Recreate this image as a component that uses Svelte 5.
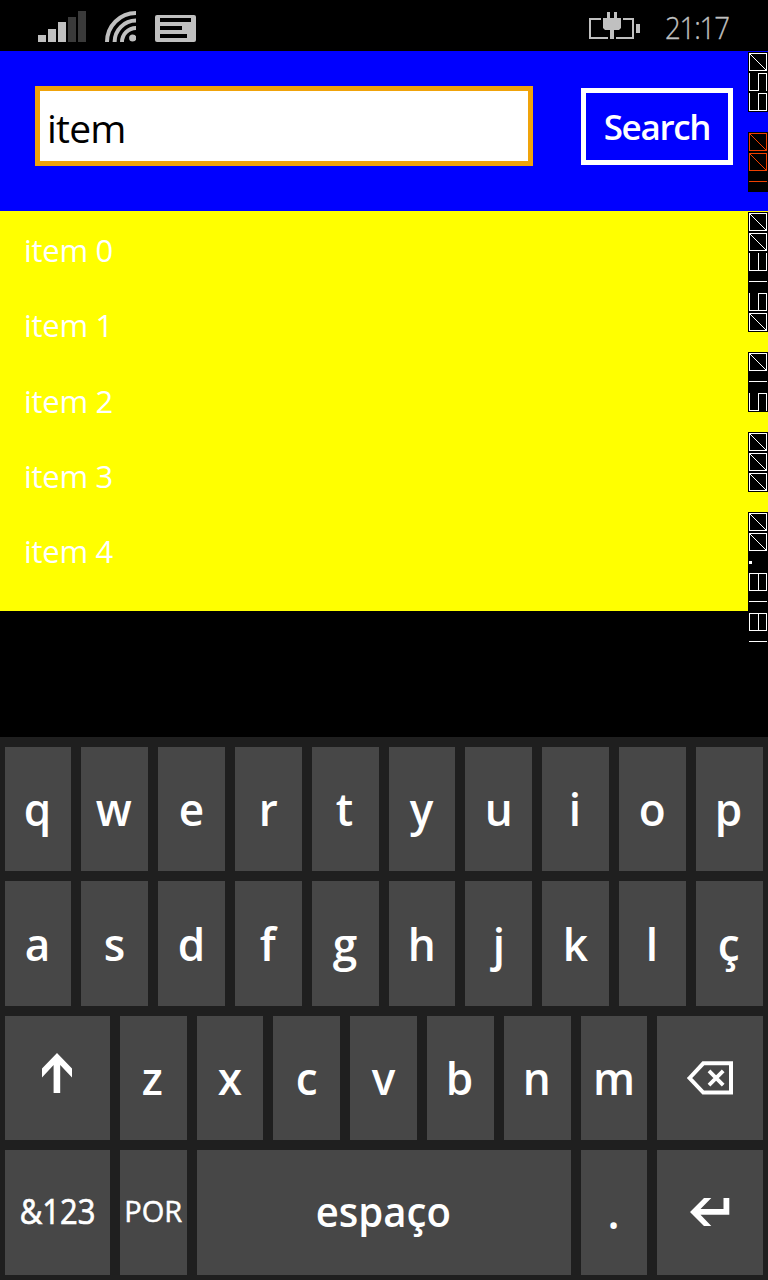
<script>
  const items = [0, 1, 2, 3, 4].map((n) => `item ${n}`);
  const rows = [
    [...'qwertyuiop'].map((k) => ({ k })),
    [...'asdfghjklç'].map((k) => ({ k })),
    [{ icon: 'shift', w: 3 }, ...[...'zxcvbnm'].map((k) => ({ k })), { icon: 'back', w: 3 }],
    [{ k: '&123', w: 3, c: 'num' }, { k: 'POR', c: 'lang' }, { k: 'espaço', w: 10, c: 'space' }, { k: '.' }, { icon: 'enter', w: 3 }]
  ];
  // Frame counters, written sideways as segment digits
  const counters = [
    { d: '056' },
    { d: '001', hot: true },
    { d: '003160' },
    { d: '015' },
    { d: '000' },
    { d: '00.8181' }
  ];
  const seg = {
    0: 'M1.5 1.5H18.5V18.5H1.5ZM1.5 1.5L18.5 18.5',
    1: 'M1 9.5H19',
    3: 'M1.5 1V18.5H18.5V1M10.5 1V18',
    5: 'M1.5 1V18.5H10.5V1.5H18.5V19',
    6: 'M1.5 1V18.5H18.5V1.5H10.5V18',
    8: 'M1.5 1.5H18.5V18.5H1.5ZM10.5 1V18',
    '.': 'M1 10.5H4M1 9.5H4M1 11.5H4'
  };
</script>

<div class="screen">
  <div class="status">
    <svg class="signal" width="48" height="31">
      <path fill="#c0c0c0" d="M0 24h8v7H0zM10 18h8v13h-8zM20 11h8v20h-8z" />
      <path fill="#3a3a3a" d="M30 6h8v25h-8zM40 0h8v31h-8z" />
    </svg>
    <svg class="wifi" width="31" height="31">
      <g fill="none" stroke="#c0c0c0" stroke-width="4">
        <circle cx="31" cy="31" r="29" /><circle cx="31" cy="31" r="21.4" /><circle cx="31" cy="31" r="14" />
      </g>
      <circle cx="27.7" cy="27" r="3.6" fill="#c0c0c0" />
    </svg>
    <svg class="msg" width="41" height="27">
      <rect width="41" height="27" rx="2" fill="#c0c0c0" />
      <path d="M5 3h31v4H5zM5 11h22v4H5zM5 19h27v4H5z" />
    </svg>
    <svg class="battery" width="52" height="27">
      <path fill="none" stroke="#c0c0c0" stroke-width="2" d="M12 7H1V26H19M34 7H44V26H27" />
      <path fill="#c0c0c0" d="M47 12h4v9h-4zM18 0h3v6h4V0h3v6h4v10l-2 2h-5v9h-4v-9h-5l-2-2V6h4z" />
    </svg>
    <span class="time">21:17</span>
  </div>

  <div class="search">
    <div class="field"><span>item</span></div>
    <div class="button"><span>Search</span></div>
  </div>

  <div class="list">
    {#each items as item}<div class="item">{item}</div>{/each}
  </div>

  <div class="keyboard">
    {#each rows as row}
      {#each row as key}
        <div class="key {key.c ?? ''}" style="grid-column: span {key.w ?? 2}">
          {#if key.icon === 'shift'}
            <svg class="shift" width="30" height="40"><path fill="#fff" d="M15 0L30 15.5V24.5L18.2 12V40H11.6V12L0 24.5V15.5Z" /></svg>
          {:else if key.icon === 'back'}
            <svg width="46" height="34">
              <path fill="none" stroke="#fff" stroke-width="4" d="M2.6 17L16.3 2.3H44V31.5H16.3Z" />
              <path fill="none" stroke="#fff" stroke-width="3.8" d="M22 9.8L36.2 24.2M36.2 9.8L22 24.2" />
            </svg>
          {:else if key.icon === 'enter'}
            <svg width="40" height="30"><path fill="#fff" d="M0 15L14 1H21.3L10.5 12H33.5V1H39.3V17.8H10.5L21.3 29H14Z" /></svg>
          {:else}
            <span>{key.k}</span>
          {/if}
        </div>
      {/each}
    {/each}
  </div>

  <div class="counters">
    {#each counters as c}
      <div class="counter" class:hot={c.hot}>
        {#each [...c.d] as d}
          <svg width="20" height="20" shape-rendering="crispEdges"><path d={seg[d]} /></svg>
        {/each}
      </div>
    {/each}
  </div>
</div>

<style>
  :global(body) { margin: 0; background: #000; }
  .screen {
    position: relative; width: 768px; height: 1280px; overflow: hidden;
    display: flex; flex-direction: column; box-sizing: border-box;
    background: #000; color: #fff; font-family: "Open Sans", "Noto Sans", sans-serif;
  }
  svg { display: block; flex: none; }
  .status { height: 51px; flex: none; display: flex; align-items: flex-start; padding: 0 38px; box-sizing: border-box; }
  .signal { margin-top: 11px; }
  .wifi { margin: 11px 0 0 19px; }
  .msg { margin: 15px 0 0 19px; }
  .battery { margin: 12px 0 0 393px; }
  .time { margin: 6px 0 0 24px; color: #c0c0c0; font-size: 31px; line-height: 42px; font-weight: 300; letter-spacing: -1.3px; white-space: nowrap; transform: scaleX(.89); transform-origin: 0 0; -webkit-text-stroke: .3px #c0c0c0; }
  .search { height: 160px; flex: none; background: #00f; display: flex; align-items: flex-start; padding: 35px 35px 0; box-sizing: border-box; justify-content: space-between; }
  .field { width: 498px; height: 80px; box-sizing: border-box; border: 5px solid #f0a30a; background: #fff; color: #000; font-size: 39px; line-height: 74px; padding-left: 7px; letter-spacing: -.8px; }
  .button { margin-top: 2px; width: 152px; height: 77px; box-sizing: border-box; border: 5px solid #fff; text-align: center; font-size: 35px; font-weight: 600; line-height: 68px; letter-spacing: -1.3px; }
  .list { height: 400px; flex: none; background: #ff0; padding: 2px 24px 0; box-sizing: border-box; }
  .item { height: 75.3px; line-height: 74px; font-size: 31px; letter-spacing: -.3px; }
  .keyboard {
    margin-top: auto; height: 543px; flex: none; box-sizing: border-box; padding: 10px 5.4px 5.4px 4.6px; background: #1f1f1f;
    display: grid; grid-template-columns: repeat(20, minmax(0, 1fr)); grid-template-rows: repeat(4, minmax(0, 1fr)); gap: 10px;
  }
  .key { background: #474747; display: flex; align-items: center; justify-content: center; font-size: 45px; font-weight: 600; line-height: 60px; }
  .key span { white-space: nowrap; transform: translateX(-.5px) scaleX(.98); }
  .key.num { font-size: 34px; font-weight: 400; -webkit-text-stroke: .7px #fff; }
  .key.num span { transform: translateY(-1px) scaleX(.91); }
  .key.lang { font-size: 29px; font-weight: 400; -webkit-text-stroke: .5px #fff; }
  .key.lang span { transform: translateY(-1px); }
  .key.space { font-size: 42px; }
  .key.space span { transform: translate(-.5px, -1px) scaleX(.955); }
  .shift { margin-bottom: 10px; }
  .counters { position: absolute; right: 0; top: 52px; display: flex; flex-direction: column; gap: 20px; }
  .counter { background: #000; width: 20px; }
  .counter path { fill: none; stroke: #fff; stroke-width: 1; }
  .hot path { stroke: #f04000; }
</style>
